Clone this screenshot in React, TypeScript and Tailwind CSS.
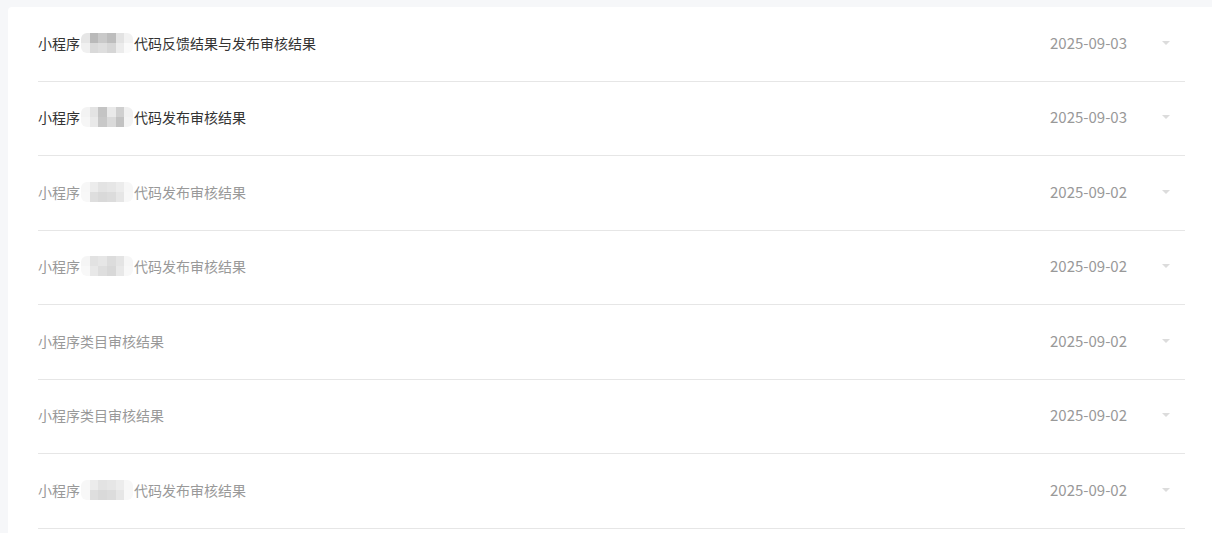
import React from "react";

type Row = {
  prefix: string;
  blur: boolean;
  suffix: string;
  date: string;
  read: boolean;
  tones: string[][];
};

const T1 = [
  ["bg-[#e6e6e6]", "bg-[#b9b9b9]", "bg-[#c9c9c9]", "bg-[#bdbdbd]", "bg-[#e3e3e3]", "bg-[#f2f2f2]"],
  ["bg-[#f0f0f0]", "bg-[#d9d9d9]", "bg-[#dedede]", "bg-[#d6d6d6]", "bg-[#ececec]", "bg-[#fafafa]"],
];
const T2 = [
  ["bg-[#f3f3f3]", "bg-[#e3e3e3]", "bg-[#c4c4c4]", "bg-[#e9e9e9]", "bg-[#cfcfcf]", "bg-[#f0f0f0]"],
  ["bg-[#f6f6f6]", "bg-[#e9e9e9]", "bg-[#c8c8c8]", "bg-[#dadada]", "bg-[#c2c2c2]", "bg-[#f3f3f3]"],
];
const T3 = [
  ["bg-[#f7f7f7]", "bg-[#ececec]", "bg-[#e3e3e3]", "bg-[#e6e6e6]", "bg-[#ececec]", "bg-[#f7f7f7]"],
  ["bg-[#f8f8f8]", "bg-[#dedede]", "bg-[#d9d9d9]", "bg-[#dcdcdc]", "bg-[#e6e6e6]", "bg-[#f8f8f8]"],
];
const T4 = [
  ["bg-[#f5f5f5]", "bg-[#e2e2e2]", "bg-[#e6e6e6]", "bg-[#dcdcdc]", "bg-[#e4e4e4]", "bg-[#f6f6f6]"],
  ["bg-[#f8f8f8]", "bg-[#e8e8e8]", "bg-[#dedede]", "bg-[#d8d8d8]", "bg-[#e8e8e8]", "bg-[#f8f8f8]"],
];

const rows: Row[] = [
  { prefix: "小程序", blur: true, suffix: "代码反馈结果与发布审核结果", date: "2025-09-03", read: false, tones: T1 },
  { prefix: "小程序", blur: true, suffix: "代码发布审核结果", date: "2025-09-03", read: false, tones: T2 },
  { prefix: "小程序", blur: true, suffix: "代码发布审核结果", date: "2025-09-02", read: true, tones: T3 },
  { prefix: "小程序", blur: true, suffix: "代码发布审核结果", date: "2025-09-02", read: true, tones: T4 },
  { prefix: "小程序类目审核结果", blur: false, suffix: "", date: "2025-09-02", read: true, tones: T1 },
  { prefix: "小程序类目审核结果", blur: false, suffix: "", date: "2025-09-02", read: true, tones: T1 },
  { prefix: "小程序", blur: true, suffix: "代码发布审核结果", date: "2025-09-02", read: true, tones: T3 },
];

function Mosaic({ tones }: { tones: string[][] }) {
  return (
    <span className="inline-flex flex-col w-[52px] h-[20px] mx-[1px] overflow-hidden rounded-[6px] blur-[0.6px] align-middle">
      {tones.map((r, i) => (
        <span key={i} className="flex h-[10px]">
          {r.map((c, j) => (
            <span key={j} className={`flex-1 ${c}`} />
          ))}
        </span>
      ))}
    </span>
  );
}

export default function App() {
  return (
    <div
      className="w-[1212px] h-[533px] overflow-hidden bg-[#f6f7f9] pl-[8px] pt-[7px]"
      style={{ fontFamily: '"Noto Sans CJK SC", "Noto Sans", sans-serif' }}
    >
      <div className="bg-white rounded-tl-[4px] h-full pl-[30px] pr-[27px]">
        {rows.map((r, i) => (
          <div
            key={i}
            className="flex items-center h-[74.5px] pb-[2px] border-b border-[#e6e6e6] box-border"
          >
            <div
              className={`flex-1 flex items-center text-[14px] leading-[20px] ${
                r.read ? "text-[#999999]" : "text-[#333333]"
              }`}
            >
              <span>{r.prefix}</span>
              {r.blur && <Mosaic tones={r.tones} />}
              {r.suffix && <span>{r.suffix}</span>}
            </div>
            <div className="text-[15px] text-[#999999] leading-[20px]">{r.date}</div>
            <div className="ml-[35px] mr-[15px] flex">
              <span className="block w-0 h-0 border-l-[4px] border-r-[4px] border-t-[4px] border-l-transparent border-r-transparent border-t-[#dcdcdc]" />
            </div>
          </div>
        ))}
      </div>
    </div>
  );
}
